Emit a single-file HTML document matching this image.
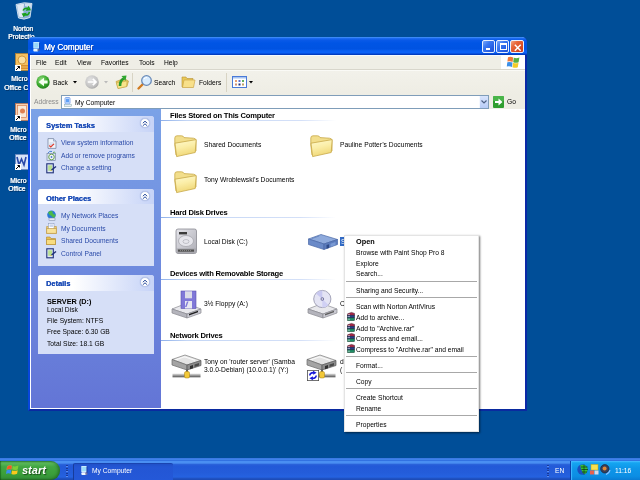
<!DOCTYPE html>
<html><head>
<meta charset="utf-8">
<style>
*{margin:0;padding:0;box-sizing:border-box}
html,body{width:640px;height:480px;overflow:hidden;background:#004e98;font-family:"Liberation Sans",sans-serif;}
.a{position:absolute}
.t{position:absolute;will-change:transform;white-space:pre;font-size:6.7px;line-height:8px;color:#000}
.b{font-weight:bold}
svg{position:absolute;overflow:visible}
.tb{position:absolute;width:13px;height:13px;border:1px solid #e8f0ff;border-radius:2px;background:linear-gradient(135deg,#7aa8fa 0,#3a78f0 35%,#2660e6 70%,#2050d0 100%)}
/* window */
#win{left:28px;top:37px;width:499px;height:374px;background:#fff;border-left:2px solid #0846dc;border-right:2px solid #0a28a6;border-bottom:2px solid #0a2aa0;border-radius:5px 5px 0 0}
#title{left:28px;top:37px;width:499px;height:18px;border-radius:5px 5px 0 0;background:linear-gradient(#3a88f6 0,#3a88f6 1px,#1a6af0 1.5px,#0a5ae8 3px,#0055e5 6px,#0053e2 12px,#0a60f4 14px,#0a62f8 16px,#0240c8 17px,#0038b8 18px)}
#menubar{left:31px;top:55px;width:494px;height:14px;background:linear-gradient(#f4faff 0,#f4faff 1px,#efeee6 1px)}
#toolbar{left:31px;top:69px;width:494px;height:26px;background:linear-gradient(#d8d6cc 0,#d8d6cc 1px,#fafaf6 1px,#fafaf6 2px,#f2f1ea 2px,#eeede4 100%)}
#addr{left:31px;top:94px;width:494px;height:15px;background:#eeede4}
#pane{left:31px;top:109px;width:130px;height:299px;background:linear-gradient(#7ba2e7,#6375d6)}
#content{left:161px;top:109px;width:364px;height:300px;background:#fff}
.box{position:absolute;left:38px;width:116px;background:#d6dff7;border-radius:3px 3px 0 0;overflow:hidden}
.boxh{position:absolute;left:0;top:0;width:116px;background:linear-gradient(90deg,#fff 0,#fff 30%,#c6d3f7 100%)}
.boxh .t{color:#215dc6;font-weight:bold;font-size:7.3px}
.lnk{color:#2a4aa8}
.chev{position:absolute;width:10px;height:10px;border-radius:5px;background:#fff;border:1px solid #b8c6ea;box-shadow:0 0 1px #8fa2d8}
.grp{font-weight:bold;font-size:7.6px;letter-spacing:-0.2px}
.uline{position:absolute;left:161px;width:175px;height:1px;background:linear-gradient(90deg,#8eb0ea 0,#c4d6f5 15%,#d4e0f8 80%,rgba(255,255,255,0) 100%)}
#menu{left:344px;top:235px;width:135px;height:197px;background:#fff;border:1px solid #e4e4e4;box-shadow:1px 1px 2px rgba(0,0,0,.55)}
.sep{position:absolute;width:131px;height:1px;background:#a8a8a8}
#taskbar{left:0;top:458px;width:640px;height:22px;background:linear-gradient(#3570dc 0px,#3e82ea 1px,#3e82ea 1.5px,#3272e2 2px,#3272e2 3px,#4a8ff2 3.5px,#4a8ff2 5px,#2a62da 6.5px,#2259d8 8px,#245dda 15px,#2562e0 19px,#1d4cb8 21px,#1d4cb8 22px)}
</style></head><body><div id="wrap" style="position:absolute;left:0;top:0;width:640px;height:480px;overflow:hidden;filter:blur(0.3px)">
<!-- desktop icons -->

<svg style="left:15px;top:1px" width="18" height="19" viewBox="0 0 18 19"><path d="M1 3.5Q9 0.5 17 2.5L15 16.5Q9 19.5 3.5 17Z" fill="#b8d0e8" fill-opacity="0.75" stroke="#e8f0f8" stroke-width="0.8"/><path d="M2 4Q6 2.5 9 3L8 16Q5.5 16.5 4 15.5Z" fill="#f4f8fc" fill-opacity="0.8"/><path d="M10 2.5Q14 2.5 16.5 3L15.5 7Q13 5.5 10 5Z" fill="#fff" fill-opacity="0.6"/><path d="M8 9.5Q9.5 6.5 12.5 7.5L12 8.8L14.8 8.6L13.6 6.2L13 7" stroke="#18a018" stroke-width="1.5" fill="none"/><path d="M14.5 11Q13.5 14.5 10 14L10.5 12.8L7.8 13.2L9.2 15.5" stroke="#18a018" stroke-width="1.5" fill="none"/></svg>
<svg style="left:15px;top:53px" width="13" height="18" viewBox="0 0 13 18"><rect x="0.5" y="0.5" width="13" height="17" fill="#f4c060" stroke="#c08020" stroke-width="0.6"/><circle cx="7" cy="7" r="4" fill="#fae0a0" stroke="#c08020" stroke-width="0.7"/><rect x="3" y="12" width="10" height="1.5" fill="#d89030"/><rect x="3" y="14.5" width="10" height="1.5" fill="#d89030"/><rect x="0" y="12" width="6" height="6" fill="#fff"/><path d="M1 17L4.5 13.5M2.5 13.5H4.5V15.5" stroke="#000" stroke-width="1" fill="none"/></svg>
<svg style="left:15px;top:103px" width="13" height="18" viewBox="0 0 13 18"><rect x="0.5" y="0.5" width="13" height="17" fill="#f8d0b0" stroke="#d07040" stroke-width="0.6"/><rect x="2.5" y="2.5" width="9" height="12" fill="#f8e8d8" stroke="#d07040" stroke-width="0.6"/><circle cx="7.5" cy="8" r="2.5" fill="#e08050"/><rect x="0" y="12" width="6" height="6" fill="#fff"/><path d="M1 17L4.5 13.5M2.5 13.5H4.5V15.5" stroke="#000" stroke-width="1" fill="none"/></svg>
<svg style="left:15px;top:154px" width="13" height="16" viewBox="0 0 13 16"><rect x="0.5" y="0.5" width="13" height="15" fill="#d8e4f8" stroke="#7088c0" stroke-width="0.6"/><path d="M2 3L4 11L6.5 5L9 11L11 3" stroke="#2848a8" stroke-width="1.6" fill="none"/><rect x="0" y="10" width="6" height="6" fill="#fff"/><path d="M1 15L4.5 11.5M2.5 11.5H4.5V13.5" stroke="#000" stroke-width="1" fill="none"/></svg>

<div class="t" style="left:13px;top:25px;color:#fff;text-shadow:0.4px 0 0 #fff,1px 1px 0 rgba(0,0,20,.5)">Norton</div>
<div class="t" style="left:8px;top:33px;color:#fff;text-shadow:0.4px 0 0 #fff,1px 1px 0 rgba(0,0,20,.5)">Protectio</div>
<div class="t" style="left:11px;top:75px;color:#fff;text-shadow:0.4px 0 0 #fff,1px 1px 0 rgba(0,0,20,.5)">Micro</div>
<div class="t" style="left:4px;top:84px;color:#fff;text-shadow:0.4px 0 0 #fff,1px 1px 0 rgba(0,0,20,.5)">Office C</div>
<div class="t" style="left:10px;top:126px;color:#fff;text-shadow:0.4px 0 0 #fff,1px 1px 0 rgba(0,0,20,.5)">Micro</div>
<div class="t" style="left:9px;top:134px;color:#fff;text-shadow:0.4px 0 0 #fff,1px 1px 0 rgba(0,0,20,.5)">Office</div>
<div class="t" style="left:10px;top:177px;color:#fff;text-shadow:0.4px 0 0 #fff,1px 1px 0 rgba(0,0,20,.5)">Micro</div>
<div class="t" style="left:8px;top:185px;color:#fff;text-shadow:0.4px 0 0 #fff,1px 1px 0 rgba(0,0,20,.5)">Office</div>

<div id="win" class="a"></div>
<div id="title" class="a"></div>
<div class="t" style="left:44px;top:43px;color:#fff;font-size:8.2px;line-height:10.6px;text-shadow:0.3px 0 0 #fff,1px 1px 0 #0a3cb0">My Computer</div>
<div id="menubar" class="a"></div>
<div id="toolbar" class="a"></div>
<div id="addr" class="a"></div>

<!-- title icon -->
<svg style="left:32px;top:40px" width="9" height="13" viewBox="0 0 9 13"><rect x="1.3" y="2" width="6.2" height="6.5" fill="#c0e8ff"/><rect x="2.3" y="3" width="4" height="4.5" fill="#98d8fa"/><rect x="7" y="2.5" width="1" height="8" fill="#1a48b0"/><rect x="1.3" y="8.8" width="5" height="2.6" rx="1" fill="#eaf6ff"/><rect x="5.5" y="9" width="2" height="2.2" fill="#5a6a9a"/></svg>
<!-- title buttons -->
<div class="a tb" style="left:482px;top:40px"><div class="a" style="left:2.5px;top:7px;width:4.5px;height:2px;background:#fff"></div></div>
<div class="a tb" style="left:496px;top:40px"><div class="a" style="left:2.5px;top:2px;width:7px;height:7px;border:1px solid #fff;border-top-width:2px"></div></div>
<div class="a tb" style="left:510px;top:40px;background:linear-gradient(135deg,#f4a888 0,#e8683c 30%,#d84a22 70%,#c83c1c);width:14px"><svg style="left:2.5px;top:2.5px" width="7.5" height="7.5"><path d="M0.8 0.8L6.7 6.7M6.7 0.8L0.8 6.7" stroke="#fff" stroke-width="1.5"/></svg></div>
<!-- menu items -->
<div class="t" style="left:36px;top:59px">File</div>
<div class="t" style="left:55px;top:59px">Edit</div>
<div class="t" style="left:77px;top:59px">View</div>
<div class="t" style="left:101px;top:59px">Favorites</div>
<div class="t" style="left:139px;top:59px">Tools</div>
<div class="t" style="left:164px;top:59px">Help</div>
<div class="a" style="left:501px;top:55px;width:24px;height:14px;background:#fff"></div>
<svg style="left:506px;top:56px" width="14" height="13" viewBox="0 0 14 13"><path d="M2 1.2Q4.5 0.2 7.2 1.5L6.6 6Q4 4.8 1.4 5.6Z" fill="#f07838"/><path d="M7.8 1.8Q10.5 2.8 13.4 1.6L12.6 6.2Q10 7.2 7.2 6.2Z" fill="#58b040"/><path d="M1.3 6.3Q4 5.5 6.5 6.6L6 11Q3.5 9.8 0.8 10.6Z" fill="#3c90e8"/><path d="M7.1 6.8Q10 7.8 12.5 6.8L11.8 11.2Q9.2 12.4 6.5 11.2Z" fill="#f4cc28"/></svg>
<!-- toolbar -->
<svg style="left:36px;top:75px" width="14" height="14" viewBox="0 0 14 14"><defs><radialGradient id="gb" cx="0.4" cy="0.35" r="0.7"><stop offset="0" stop-color="#9ee28a"/><stop offset="0.6" stop-color="#3aa92e"/><stop offset="1" stop-color="#1d7a1a"/></radialGradient></defs><circle cx="7" cy="7" r="6.7" fill="url(#gb)"/><path d="M2.5 7L8 2.8V5.6H11.6V8.4H8V11.2Z" fill="#f4fff0"/></svg>
<div class="t" style="left:53px;top:79px">Back</div>
<svg style="left:73px;top:81px" width="4" height="3"><path d="M0 0H4L2 2.5Z" fill="#000"/></svg>
<svg style="left:85px;top:75px" width="14" height="14" viewBox="0 0 14 14"><defs><radialGradient id="gf" cx="0.4" cy="0.35" r="0.75"><stop offset="0" stop-color="#e4e4e4"/><stop offset="0.7" stop-color="#c0c0c0"/><stop offset="1" stop-color="#9a9a9a"/></radialGradient></defs><circle cx="7" cy="7" r="6.8" fill="url(#gf)"/><path d="M2.8 7H10.5M7.8 3.8L11 7L7.8 10.2" stroke="#fff" stroke-width="1.7" fill="none"/></svg>
<svg style="left:104px;top:81px" width="4" height="3"><path d="M0 0H4L2 2.5Z" fill="#bbb"/></svg>
<!-- up -->
<svg style="left:115px;top:74px" width="15" height="15" viewBox="0 0 15 15"><path d="M1 7.5L5 6L11 5.5L13.5 7L12 12.5L3 14.5Z" fill="#e8c860" stroke="#b89838" stroke-width="0.6"/><path d="M1.5 9L12 7L11.5 12.5L3 14.5Z" fill="#f8e48a" stroke="#c0a040" stroke-width="0.5"/><path d="M5 12Q5 6 9 4.5" stroke="#2a9a2a" stroke-width="2.6" fill="none"/><path d="M6.5 2L11.5 1.5L10.5 7Z" fill="#30a830"/></svg>
<div class="a" style="left:132px;top:73px;width:1px;height:19px;background:#d8d4c4"></div>
<!-- search -->
<svg style="left:137px;top:74px" width="16" height="16" viewBox="0 0 16 16"><path d="M1.5 14.5L6 10" stroke="#d07a20" stroke-width="2.4" stroke-linecap="round"/><circle cx="9.5" cy="6.5" r="4.8" fill="#d8ecff" stroke="#6a8bb8" stroke-width="1.3"/><path d="M7 5Q8 3.5 10 3.5" stroke="#fff" stroke-width="1" fill="none"/></svg>
<div class="t" style="left:154px;top:79px">Search</div>
<!-- folders -->
<svg style="left:181px;top:75px" width="15" height="14" viewBox="0 0 15 14"><path d="M1 2H5L6 3.5H12V12H1Z" fill="#e8c858" stroke="#b89030" stroke-width="0.6"/><path d="M3 5H14L12.5 12.5H1.5Z" fill="#f8e08a" stroke="#c8a040" stroke-width="0.6"/></svg>
<div class="t" style="left:199px;top:79px">Folders</div>
<div class="a" style="left:226px;top:73px;width:1px;height:19px;background:#d8d4c4"></div>
<!-- views -->
<svg style="left:232px;top:76px" width="15" height="12" viewBox="0 0 15 12"><rect x="0.5" y="0.5" width="14" height="11" fill="#fff" stroke="#4a7ad8" stroke-width="1"/><rect x="1" y="1" width="13" height="1.5" fill="#a8c4f0"/><rect x="3" y="4" width="2" height="2" fill="#e8a070"/><rect x="6.5" y="4" width="2" height="2" fill="#6070d0"/><rect x="10" y="4" width="2" height="2" fill="#60b060"/><rect x="3" y="7.5" width="2" height="2" fill="#d09070"/><rect x="6.5" y="7.5" width="2" height="2" fill="#203080"/><rect x="10" y="7.5" width="2" height="2" fill="#c0a060"/></svg>
<svg style="left:249px;top:81px" width="4" height="3"><path d="M0 0H4L2 2.5Z" fill="#000"/></svg>
<!-- address -->
<div class="t" style="left:34px;top:98px;color:#8a8a8a">Address</div>
<div class="a" style="left:61px;top:95px;width:428px;height:14px;background:#fff;border:1px solid #7f9db9"></div>
<svg style="left:64px;top:97px" width="8" height="10" viewBox="0 0 8 10"><rect x="1" y="0.5" width="5" height="6.5" rx="1" fill="#cfe3ff" stroke="#6f9be8" stroke-width="0.8"/><rect x="2" y="1.8" width="3" height="3.5" fill="#5fa0f5"/><rect x="0.5" y="7.5" width="7" height="2" fill="#e8eef8" stroke="#8aa" stroke-width="0.5"/></svg>
<div class="t" style="left:75px;top:99px">My Computer</div>
<div class="a" style="left:479px;top:96px;width:9px;height:12px;background:linear-gradient(#d8e4fc,#b8ccf6);border-left:1px solid #f4f8ff"></div>
<svg style="left:481px;top:100px" width="6" height="4"><path d="M0.5 0.5L3 3L5.5 0.5" stroke="#4d6185" stroke-width="1.2" fill="none"/></svg>
<svg style="left:493px;top:96px" width="11" height="12" viewBox="0 0 11 12"><rect x="0" y="0" width="11" height="12" rx="1" fill="#2f9e2f"/><rect x="0" y="0" width="11" height="5" rx="1" fill="#5cc45c" opacity="0.6"/><path d="M2 5H5.5V2.5L9.5 6L5.5 9.5V7H2Z" fill="#fff"/></svg>
<div class="t" style="left:507px;top:98px">Go</div>

<div id="pane" class="a"></div>
<div id="content" class="a"></div>


<!-- right pane -->
<svg style="left:0;top:0" width="0" height="0"><defs><linearGradient id="fgrad" x1="0" y1="0" x2="0.3" y2="1"><stop offset="0" stop-color="#fffad0"/><stop offset="0.5" stop-color="#fbeea8"/><stop offset="1" stop-color="#f0d878"/></linearGradient><linearGradient id="hdg" x1="0" y1="0" x2="1" y2="1"><stop offset="0" stop-color="#e4e4ea"/><stop offset="1" stop-color="#aeaeb6"/></linearGradient><linearGradient id="barg" x1="0" y1="0" x2="0" y2="1"><stop offset="0" stop-color="#e8e8e8"/><stop offset="1" stop-color="#505050"/></linearGradient></defs></svg>
<div class="t grp" style="left:170px;top:112px">Files Stored on This Computer</div>
<div class="uline" style="top:120px"></div>
<svg style="left:172px;top:133px" width="26" height="26" viewBox="0 0 26 26"><path d="M2.8 12V5Q2.8 2.8 5 2.8H9.5Q11.5 2.8 12 4.6L21.5 5.2Q24 5.4 24 7.5V18L4 22Z" fill="#f2de8c" stroke="#c8a848" stroke-width="0.8"/><path d="M3 10.2L24.2 6.6L23.2 19.5L4.6 23.6Z" fill="url(#fgrad)" stroke="#c8a848" stroke-width="0.8" stroke-linejoin="round"/></svg>
<div class="t" style="left:204px;top:141px">Shared Documents</div>
<svg style="left:308px;top:133px" width="26" height="26" viewBox="0 0 26 26"><path d="M2.8 12V5Q2.8 2.8 5 2.8H9.5Q11.5 2.8 12 4.6L21.5 5.2Q24 5.4 24 7.5V18L4 22Z" fill="#f2de8c" stroke="#c8a848" stroke-width="0.8"/><path d="M3 10.2L24.2 6.6L23.2 19.5L4.6 23.6Z" fill="url(#fgrad)" stroke="#c8a848" stroke-width="0.8" stroke-linejoin="round"/></svg>
<div class="t" style="left:340px;top:141px">Pauline Potter’s Documents</div>
<svg style="left:172px;top:169px" width="26" height="26" viewBox="0 0 26 26"><path d="M2.8 12V5Q2.8 2.8 5 2.8H9.5Q11.5 2.8 12 4.6L21.5 5.2Q24 5.4 24 7.5V18L4 22Z" fill="#f2de8c" stroke="#c8a848" stroke-width="0.8"/><path d="M3 10.2L24.2 6.6L23.2 19.5L4.6 23.6Z" fill="url(#fgrad)" stroke="#c8a848" stroke-width="0.8" stroke-linejoin="round"/></svg>
<div class="t" style="left:204px;top:176px">Tony Wroblewski’s Documents</div>

<div class="t grp" style="left:170px;top:209px">Hard Disk Drives</div>
<div class="uline" style="top:217px"></div>
<svg style="left:174px;top:228px" width="24" height="27" viewBox="0 0 24 27"><rect x="2" y="1" width="20.5" height="24.5" rx="2" fill="url(#hdg)" stroke="#8a8a92" stroke-width="0.8"/><rect x="5" y="4" width="8" height="2.4" fill="#3a3a3a"/><ellipse cx="12" cy="13" rx="7.5" ry="5.5" fill="#e6e6ec" stroke="#a0a0a8" stroke-width="0.7"/><ellipse cx="12" cy="13.5" rx="3" ry="2" fill="none" stroke="#a8a8b0" stroke-width="0.6"/><rect x="2.5" y="20.5" width="19.5" height="4.5" fill="#a8a8ae"/><rect x="4" y="21.5" width="16" height="2.2" fill="#505050"/><path d="M6 22.6H18" stroke="#c8c8c8" stroke-width="0.5" stroke-dasharray="1 1"/></svg>
<div class="t" style="left:204px;top:238px">Local Disk (C:)</div>
<svg style="left:307px;top:233px" width="32" height="18" viewBox="0 0 32 18"><path d="M1.5 6L14 1.5L30.5 6.5L17 11Z" fill="#8eaadc" stroke="#4a68a8" stroke-width="0.7"/><path d="M1.5 6L17 11V16.5L1.5 11.5Z" fill="#6a8ac8" stroke="#4a68a8" stroke-width="0.7"/><path d="M17 11L30.5 6.5V11.5L17 16.5Z" fill="#5c7cbc" stroke="#4a68a8" stroke-width="0.7"/><path d="M19.5 12L22 11.2V15L19.5 15.8Z" fill="#2e4a88"/><path d="M23.5 10.7L28.5 9V12L23.5 13.7Z" fill="#7a9ad4"/><path d="M5 5.5L12 3" stroke="#6a88c0" stroke-width="1"/></svg>
<div class="a" style="left:340px;top:237px;width:5px;height:9px;background:#316ac5;overflow:hidden"><div class="t" style="left:1px;top:0.5px;color:#fff">S</div></div>

<div class="t grp" style="left:170px;top:270px">Devices with Removable Storage</div>
<div class="uline" style="top:279px"></div>
<svg style="left:170px;top:289px" width="32" height="30" viewBox="0 0 32 30"><path d="M2 20L16 14.5L31 20L17 25Z" fill="#e8e8ec" stroke="#8a8a90" stroke-width="0.7"/><path d="M2 20L17 25V29L2 24Z" fill="#b4b4bc" stroke="#8a8a90" stroke-width="0.7"/><path d="M17 25L31 20V24L17 29Z" fill="#cacad2" stroke="#8a8a90" stroke-width="0.7"/><path d="M19 25L28 21.8V23.3L19 26.5Z" fill="#202020"/><rect x="11" y="2" width="15" height="17.5" fill="#8078d8" stroke="#5a50b0" stroke-width="0.6"/><rect x="15" y="2.3" width="7" height="7" fill="#dcdce8"/><rect x="15" y="12" width="7" height="7.5" fill="#e8e8f2"/><path d="M15 18L17 12.5H18.5L16.5 18Z" fill="#8078d8"/></svg>
<div class="t" style="left:204px;top:300px">3½ Floppy (A:)</div>
<svg style="left:306px;top:289px" width="32" height="30" viewBox="0 0 32 30"><path d="M2 20L16 14.5L31 20L17 25Z" fill="#e8e8ec" stroke="#8a8a90" stroke-width="0.7"/><path d="M2 20L17 25V29L2 24Z" fill="#b4b4bc" stroke="#8a8a90" stroke-width="0.7"/><path d="M17 25L31 20V24L17 29Z" fill="#cacad2" stroke="#8a8a90" stroke-width="0.7"/><path d="M19 25L28 21.8V23.3L19 26.5Z" fill="#606060"/><circle cx="16.3" cy="10" r="8.6" fill="#e4e4f4" stroke="#9090a8" stroke-width="0.8"/><path d="M16.3 10L10 4.5A8.6 8.6 0 0 1 16.3 1.4Z" fill="#c8c8f0"/><path d="M16.3 10L22.5 16A8.6 8.6 0 0 1 16.3 18.6Z" fill="#d0d0f4"/><circle cx="16.3" cy="10" r="1.8" fill="#7070a0"/><circle cx="16.3" cy="10" r="0.8" fill="#fff"/></svg>
<div class="t" style="left:340px;top:300px">C</div>

<div class="t grp" style="left:170px;top:332px">Network Drives</div>
<div class="uline" style="top:340px"></div>
<svg style="left:170px;top:353px" width="32" height="27" viewBox="0 0 32 27"><path d="M2 6.5L15 2L31 7.5L17 12Z" fill="#e4e4e4" stroke="#7a7a7a" stroke-width="0.7"/><path d="M5 7L14.5 3.8L25 7.3" stroke="#fafafa" stroke-width="1.2" fill="none"/><path d="M2 6.5L17 12V17L2 12Z" fill="#a4a4a4" stroke="#6a6a6a" stroke-width="0.7"/><path d="M17 12L31 7.5V12.5L17 17Z" fill="#8c8c8c" stroke="#5a5a5a" stroke-width="0.7"/><path d="M20 13L23 12V15.3L20 16.3Z" fill="#303030"/><path d="M24.5 11.5L29 10V12.5L24.5 14Z" fill="#4a4a4a"/><rect x="16" y="16.5" width="2" height="3.5" fill="#606060"/><rect x="2.5" y="20.5" width="28" height="3.8" fill="url(#barg)"/><rect x="14.5" y="18.5" width="5" height="6.5" rx="1.5" fill="#f2c838" stroke="#a88010" stroke-width="0.5"/></svg>
<div class="t" style="left:204px;top:358px">Tony on 'router server' (Samba</div>
<div class="t" style="left:204px;top:366px">3.0.0-Debian) (10.0.0.1)' (Y:)</div>
<svg style="left:305px;top:353px" width="32" height="27" viewBox="0 0 32 27"><path d="M2 6.5L15 2L31 7.5L17 12Z" fill="#e4e4e4" stroke="#7a7a7a" stroke-width="0.7"/><path d="M5 7L14.5 3.8L25 7.3" stroke="#fafafa" stroke-width="1.2" fill="none"/><path d="M2 6.5L17 12V17L2 12Z" fill="#a4a4a4" stroke="#6a6a6a" stroke-width="0.7"/><path d="M17 12L31 7.5V12.5L17 17Z" fill="#8c8c8c" stroke="#5a5a5a" stroke-width="0.7"/><path d="M20 13L23 12V15.3L20 16.3Z" fill="#303030"/><path d="M24.5 11.5L29 10V12.5L24.5 14Z" fill="#4a4a4a"/><rect x="16" y="16.5" width="2" height="3.5" fill="#606060"/><rect x="2.5" y="20.5" width="28" height="3.8" fill="url(#barg)"/><rect x="14.5" y="18.5" width="5" height="6.5" rx="1.5" fill="#f2c838" stroke="#a88010" stroke-width="0.5"/></svg>
<svg style="left:307px;top:370px" width="12" height="11" viewBox="0 0 12 11"><rect x="0.4" y="0.4" width="11.2" height="10.2" fill="#fff" stroke="#505050" stroke-width="0.8"/><path d="M2.8 5.5Q3 2.5 6.8 2.6" stroke="#1818d8" stroke-width="1.6" fill="none"/><path d="M6 0.8L9.6 2.8L6.2 4.8Z" fill="#1818d8"/><path d="M9.2 5.5Q9 8.5 5.2 8.4" stroke="#1818d8" stroke-width="1.6" fill="none"/><path d="M6 6.2L2.4 8.2L5.8 10.2Z" fill="#1818d8"/></svg>
<div class="t" style="left:340px;top:358px">d</div>
<div class="t" style="left:340px;top:366px">(</div>

<!-- System Tasks -->
<div class="box" style="top:116px;height:64px">
 <div class="boxh" style="height:16px"></div>
</div>
<div class="t" style="left:46px;top:122px;color:#1f4fb8;font-weight:bold;font-size:7.4px;text-shadow:0.25px 0 0 #1f4fb8">System Tasks</div>
<div class="chev" style="left:140px;top:118px"></div>
<svg style="left:142px;top:120px" width="6" height="7" viewBox="0 0 6 7"><path d="M0.8 3.2L3 1.2L5.2 3.2M0.8 5.8L3 3.8L5.2 5.8" stroke="#2d4f9e" stroke-width="1" fill="none"/></svg>
<svg style="left:47px;top:138px" width="10" height="11" viewBox="0 0 10 11"><path d="M1 0.6H6.5L9 3.1V10.4H1Z" fill="#eef4fc" stroke="#6a7a9a" stroke-width="0.7"/><path d="M6.5 0.6V3.1H9" fill="#c8d8f0" stroke="#6a7a9a" stroke-width="0.5"/><path d="M2.5 5H7.5M2.5 6.5H7" stroke="#a8b8d8" stroke-width="0.5"/><path d="M2.3 7.5L3.8 9L7 5.8" stroke="#e03a2a" stroke-width="1.2" fill="none"/></svg>
<div class="t lnk" style="left:61px;top:139px">View system information</div>
<svg style="left:46px;top:150px" width="11" height="11" viewBox="0 0 11 11"><rect x="1" y="3.5" width="8.5" height="7" fill="#dde6f4" stroke="#6a7a9a" stroke-width="0.6"/><circle cx="5.5" cy="7" r="2.8" fill="#f4f4fa" stroke="#5a9a40" stroke-width="0.9"/><circle cx="5.5" cy="7" r="0.9" fill="#4a7ac8"/><path d="M2 3Q3.5 0.5 6 1.5" stroke="#3a78d0" stroke-width="0.9" fill="none"/><path d="M7 2.5Q8.5 1.5 9.5 3" stroke="#50a040" stroke-width="0.9" fill="none"/></svg>
<div class="t lnk" style="left:61px;top:152px">Add or remove programs</div>
<svg style="left:46px;top:163px" width="11" height="11" viewBox="0 0 11 11"><rect x="0.8" y="0.8" width="6.5" height="9" fill="#dfe8f4" stroke="#1f2f78" stroke-width="1.1"/><rect x="2.2" y="2.3" width="3.8" height="5.5" fill="#b8e090"/><path d="M5.5 7L10 3.5" stroke="#1f2f78" stroke-width="1.4"/><path d="M4.5 8L5.5 7" stroke="#e0b040" stroke-width="1"/></svg>
<div class="t lnk" style="left:61px;top:164px">Change a setting</div>

<!-- Other Places -->
<div class="box" style="top:189px;height:77px">
 <div class="boxh" style="height:15px"></div>
</div>
<div class="t" style="left:46px;top:195px;color:#1f4fb8;font-weight:bold;font-size:7.4px;text-shadow:0.25px 0 0 #1f4fb8">Other Places</div>
<div class="chev" style="left:140px;top:191px"></div>
<svg style="left:142px;top:193px" width="6" height="7" viewBox="0 0 6 7"><path d="M0.8 3.2L3 1.2L5.2 3.2M0.8 5.8L3 3.8L5.2 5.8" stroke="#2d4f9e" stroke-width="1" fill="none"/></svg>
<svg style="left:46px;top:210px" width="11" height="11" viewBox="0 0 11 11"><circle cx="5.5" cy="4.8" r="4.3" fill="#2a7ad8"/><path d="M2 2.5Q4 0.8 6.5 1.2Q6 3 7.5 4Q9 5 9.6 4.2Q9.8 6.5 8 8Q6 7 5 5.5Q3 5 2 2.5Z" fill="#4cb84a"/><rect x="3" y="8" width="6" height="2.6" fill="#e8ecf4" stroke="#7080a0" stroke-width="0.5"/></svg>
<div class="t lnk" style="left:61px;top:212px">My Network Places</div>
<svg style="left:46px;top:223px" width="11" height="11" viewBox="0 0 11 11"><path d="M0.6 3.5H10.4V10.4H0.6Z" fill="#f0d070" stroke="#b89040" stroke-width="0.6"/><rect x="2.5" y="0.6" width="5.5" height="5.5" fill="#fff" stroke="#8090b8" stroke-width="0.5"/><path d="M3.5 2H7M3.5 3.2H7" stroke="#6a8ad0" stroke-width="0.5"/><path d="M0.6 5.5H10.4V10.4H0.6Z" fill="#f8e29a" stroke="#b89040" stroke-width="0.6"/></svg>
<div class="t lnk" style="left:61px;top:225px">My Documents</div>
<svg style="left:46px;top:236px" width="10" height="9" viewBox="0 0 10 9"><path d="M0.5 1H4L5 2.5H9.5V8.5H0.5Z" fill="#e8c050" stroke="#b08830" stroke-width="0.6"/><path d="M0.5 3.5H9.5V8.5H0.5Z" fill="#f8dc80" stroke="#b08830" stroke-width="0.6"/></svg>
<div class="t lnk" style="left:61px;top:237px">Shared Documents</div>
<svg style="left:46px;top:248px" width="11" height="11" viewBox="0 0 11 11"><rect x="0.8" y="0.8" width="6.5" height="9" fill="#dfe8f4" stroke="#1f2f78" stroke-width="1.1"/><rect x="2.2" y="2.3" width="3.8" height="5.5" fill="#b8e090"/><path d="M5.5 7L10 3.5" stroke="#1f2f78" stroke-width="1.4"/><path d="M4.5 8L5.5 7" stroke="#e0b040" stroke-width="1"/></svg>
<div class="t lnk" style="left:61px;top:250px">Control Panel</div>

<!-- Details -->
<div class="box" style="top:275px;height:79px">
 <div class="boxh" style="height:16px"></div>
</div>
<div class="t" style="left:46px;top:280px;color:#1f4fb8;font-weight:bold;font-size:7.4px;text-shadow:0.25px 0 0 #1f4fb8">Details</div>
<div class="chev" style="left:140px;top:277px"></div>
<svg style="left:142px;top:279px" width="6" height="7" viewBox="0 0 6 7"><path d="M0.8 3.2L3 1.2L5.2 3.2M0.8 5.8L3 3.8L5.2 5.8" stroke="#2d4f9e" stroke-width="1" fill="none"/></svg>
<div class="t b" style="left:47px;top:298px;font-size:7.3px">SERVER (D:)</div>
<div class="t" style="left:47px;top:306px">Local Disk</div>
<div class="t" style="left:47px;top:317px">File System: NTFS</div>
<div class="t" style="left:47px;top:328px">Free Space: 6.30 GB</div>
<div class="t" style="left:47px;top:340px">Total Size: 18.1 GB</div>


<div id="menu" class="a"></div>
<div id="menuc" class="a" style="left:0;top:0">
<div class="t b" style="left:356px;top:238px;font-size:7.3px">Open</div>
<div class="t" style="left:356px;top:249px">Browse with Paint Shop Pro 8</div>
<div class="t" style="left:356px;top:260px">Explore</div>
<div class="t" style="left:356px;top:270px">Search...</div>
<div class="t" style="left:356px;top:287px">Sharing and Security...</div>
<div class="t" style="left:356px;top:303px">Scan with Norton AntiVirus</div>
<div class="t" style="left:356px;top:314px">Add to archive...</div>
<div class="t" style="left:356px;top:325px">Add to "Archive.rar"</div>
<div class="t" style="left:356px;top:335px">Compress and email...</div>
<div class="t" style="left:356px;top:346px">Compress to "Archive.rar" and email</div>
<div class="t" style="left:356px;top:362px">Format...</div>
<div class="t" style="left:356px;top:378px">Copy</div>
<div class="t" style="left:356px;top:394px">Create Shortcut</div>
<div class="t" style="left:356px;top:405px">Rename</div>
<div class="t" style="left:356px;top:421px">Properties</div>
<svg style="left:347px;top:312px" width="8" height="9" viewBox="0 0 8 9"><path d="M0.6 1.8L4.5 0.4L7.5 1.4V3.3H0.6Z" fill="#a82848" stroke="#3a1020" stroke-width="0.5"/><rect x="0.6" y="3.3" width="6.9" height="2.6" fill="#283c88" stroke="#101838" stroke-width="0.5"/><rect x="0.6" y="5.9" width="6.9" height="2.7" fill="#209068" stroke="#103828" stroke-width="0.5"/><path d="M0.9 2.6H3M0.9 4.6H3M0.9 7.2H3" stroke="#f0f0f0" stroke-width="0.6"/></svg><svg style="left:347px;top:323px" width="8" height="9" viewBox="0 0 8 9"><path d="M0.6 1.8L4.5 0.4L7.5 1.4V3.3H0.6Z" fill="#a82848" stroke="#3a1020" stroke-width="0.5"/><rect x="0.6" y="3.3" width="6.9" height="2.6" fill="#283c88" stroke="#101838" stroke-width="0.5"/><rect x="0.6" y="5.9" width="6.9" height="2.7" fill="#209068" stroke="#103828" stroke-width="0.5"/><path d="M0.9 2.6H3M0.9 4.6H3M0.9 7.2H3" stroke="#f0f0f0" stroke-width="0.6"/></svg><svg style="left:347px;top:333px" width="8" height="9" viewBox="0 0 8 9"><path d="M0.6 1.8L4.5 0.4L7.5 1.4V3.3H0.6Z" fill="#a82848" stroke="#3a1020" stroke-width="0.5"/><rect x="0.6" y="3.3" width="6.9" height="2.6" fill="#283c88" stroke="#101838" stroke-width="0.5"/><rect x="0.6" y="5.9" width="6.9" height="2.7" fill="#209068" stroke="#103828" stroke-width="0.5"/><path d="M0.9 2.6H3M0.9 4.6H3M0.9 7.2H3" stroke="#f0f0f0" stroke-width="0.6"/></svg><svg style="left:347px;top:344px" width="8" height="9" viewBox="0 0 8 9"><path d="M0.6 1.8L4.5 0.4L7.5 1.4V3.3H0.6Z" fill="#a82848" stroke="#3a1020" stroke-width="0.5"/><rect x="0.6" y="3.3" width="6.9" height="2.6" fill="#283c88" stroke="#101838" stroke-width="0.5"/><rect x="0.6" y="5.9" width="6.9" height="2.7" fill="#209068" stroke="#103828" stroke-width="0.5"/><path d="M0.9 2.6H3M0.9 4.6H3M0.9 7.2H3" stroke="#f0f0f0" stroke-width="0.6"/></svg><div class="sep" style="left:346px;top:281px"></div>
<div class="sep" style="left:346px;top:297px"></div>
<div class="sep" style="left:346px;top:356px"></div>
<div class="sep" style="left:346px;top:372px"></div>
<div class="sep" style="left:346px;top:388px"></div>
<div class="sep" style="left:346px;top:415px"></div>
</div>

<div id="taskbar" class="a"></div>

<div class="a" style="left:0;top:461px;width:60px;height:19px;border-radius:0 9px 9px 0;background:linear-gradient(#3a8f3a 0,#5cba5c 10%,#42a642 30%,#3a9e3a 70%,#35923a 90%,#2a7a2a 100%);box-shadow:inset -2px 0 3px rgba(0,40,0,.35),inset 1px 0 1px rgba(0,60,0,.4)"></div>
<svg style="left:6px;top:464px" width="13" height="12" viewBox="0 0 13 12"><path d="M1.2 2.4Q3.5 0.6 6 1.8L5.4 5.4Q3 4.4 0.6 5.7Z" fill="#f05a22" stroke="#fff" stroke-opacity=".4" stroke-width=".3"/><path d="M6.7 2Q9.3 3 12.4 1.6L11.8 5.4Q9.2 6.6 6.1 5.6Z" fill="#7ccd36"/><path d="M0.5 6.4Q3 5.1 5.3 6.2L4.7 9.8Q2.4 8.8 0 10Z" fill="#3a8ef2"/><path d="M6 6.4Q9 7.3 11.7 6.2L11.1 9.8Q8.6 11.1 5.4 10Z" fill="#fbc81c"/></svg>
<div class="t b" style="left:22px;top:464px;color:#fff;font-size:11px;line-height:13px;font-style:italic;text-shadow:1px 1px 1px #1a4a1a">start</div>
<div class="a" style="left:66px;top:465px;width:2px;height:12px;background:repeating-linear-gradient(#1a3a98 0,#1a3a98 1px,#5a8af0 1px,#5a8af0 1.5px,transparent 1.5px,transparent 2.5px)"></div>
<div class="a" style="left:73px;top:463px;width:100px;height:17px;background:linear-gradient(#2050c8,#2356d4 3px,#2458d8);border-radius:2px 2px 0 0;border-left:1px solid #173c9a;border-top:1px solid #1a44b0"></div>
<svg style="left:80px;top:465px" width="9" height="11" viewBox="0 0 9 11"><rect x="1.3" y="1" width="5.5" height="6" fill="#c8ecff"/><rect x="2.2" y="2" width="3.8" height="4" fill="#9adcfa"/><rect x="6.5" y="1.5" width="1" height="7" fill="#1a3aa0"/><rect x="1.3" y="7.3" width="5" height="2.6" rx="1" fill="#f0f8ff"/><rect x="5.3" y="7.5" width="2" height="2.2" fill="#7a7aa0"/></svg>
<div class="t" style="left:92px;top:467px;color:#fff">My Computer</div>
<div class="a" style="left:547px;top:465px;width:2px;height:12px;background:repeating-linear-gradient(#1a3a98 0,#1a3a98 1px,#5a8af0 1px,#5a8af0 1.5px,transparent 1.5px,transparent 2.5px)"></div>
<div class="t" style="left:555px;top:467px;color:#fff">EN</div>
<div class="a" style="left:570px;top:461px;width:70px;height:19px;background:linear-gradient(#2ab4f8 0,#14a4f0 12%,#0e95e8 40%,#0c8ee4 80%,#0a7cd4 100%);border-left:1px solid #0d3fa8;box-shadow:inset 1px 1px 1px #40b8ff"></div>
<svg style="left:577px;top:464px" width="11" height="11" viewBox="0 0 11 11"><circle cx="5.5" cy="5.5" r="5.2" fill="#1a50c0"/><path d="M3.5 1Q8 -0.5 10.5 4Q11 8 8 10Q5 9 4.5 6Q3 3 3.5 1Z" fill="#38c038"/><path d="M4 3H10.5M4.5 5.5H11M5 8H10" stroke="#0a3010" stroke-width="0.7"/><path d="M7 0.5V10.5" stroke="#0a3010" stroke-width="0.6"/></svg>
<svg style="left:590px;top:464px" width="9" height="11" viewBox="0 0 9 11"><rect x="1" y="0.5" width="7" height="5.5" fill="#f8e050" stroke="#c8a810" stroke-width="0.5"/><rect x="0" y="6.5" width="4" height="4" fill="#e86050"/><rect x="4.5" y="6.5" width="4" height="4" fill="#d8d8e8"/></svg>
<svg style="left:600px;top:464px" width="11" height="12" viewBox="0 0 11 12"><circle cx="4.8" cy="4.8" r="4.2" fill="#3a3f58" stroke="#1a1a28" stroke-width="0.6"/><circle cx="4.6" cy="4.6" r="2" fill="#e08838"/><path d="M6 10.5Q9.5 9 10 6" stroke="#90c0ff" stroke-width="1.1" fill="none"/></svg>
<div class="t" style="left:615px;top:467px;color:#fff">11:16</div>

</div></body></html>
